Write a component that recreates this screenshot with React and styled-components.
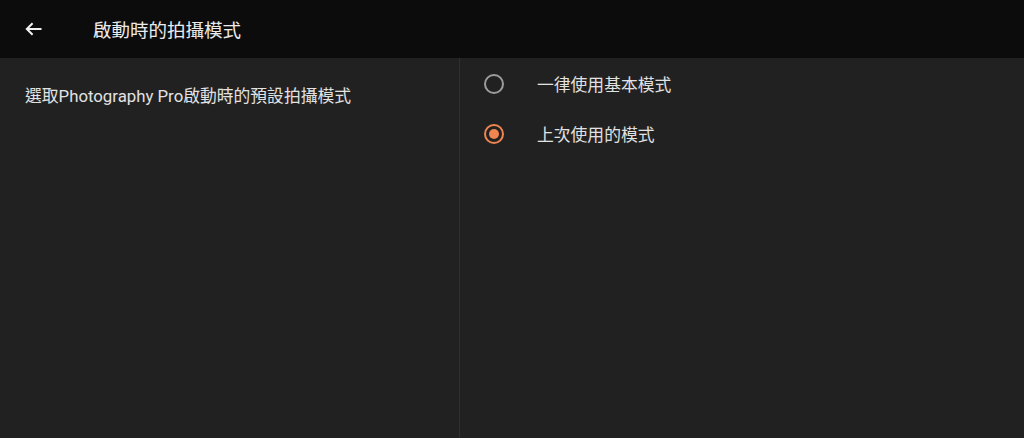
import React, { useState } from "react";
import styled, { createGlobalStyle } from "styled-components";

const GlobalStyle = createGlobalStyle`
  html, body {
    margin: 0;
    padding: 0;
    background: #212121;
  }
  body {
    font-family: Roboto, "Noto Sans CJK TC", "Noto Sans", sans-serif;
  }
`;

const Page = styled.div`
  width: 1024px;
  height: 438px;
  display: flex;
  flex-direction: column;
  background: #212121;
  overflow: hidden;
`;

const Header = styled.header`
  height: 58px;
  flex: 0 0 58px;
  display: flex;
  align-items: center;
  background: #0c0c0c;
  padding-left: 25px;
`;

const BackButton = styled.button`
  width: 17px;
  height: 14px;
  padding: 0;
  margin: 0 51px 0 0;
  border: 0;
  background: none;
  display: flex;
  align-items: center;
  cursor: pointer;
`;

const Title = styled.h1`
  margin: 0;
  font-size: 18.5px;
  font-weight: 400;
  color: #ececec;
`;

const Body = styled.div`
  flex: 1;
  display: flex;
`;

const LeftPane = styled.div`
  width: 460px;
  border-right: 1px solid #2f2f2f;
  padding: 26px 0 0 25px;
  box-sizing: border-box;
`;

const Description = styled.p`
  margin: 0;
  font-size: 16.8px;
  line-height: 24px;
  color: #e2e2e2;
`;

const Options = styled.div`
  flex: 1;
  display: flex;
  flex-direction: column;
  padding-top: 1px;
`;

const Option = styled.label`
  height: 50px;
  display: flex;
  align-items: center;
  padding-left: 24px;
  cursor: pointer;
`;

const Radio = styled.span`
  width: 20px;
  height: 20px;
  box-sizing: border-box;
  border-radius: 50%;
  border: 2px solid ${({ $checked }) => ($checked ? "#ef8550" : "#9c9c9c")};
  display: flex;
  align-items: center;
  justify-content: center;
  margin-right: 33px;

  &::after {
    content: "";
    width: 10px;
    height: 10px;
    border-radius: 50%;
    background: #ef8550;
    display: ${({ $checked }) => ($checked ? "block" : "none")};
  }
`;

const OptionText = styled.span`
  font-size: 16.8px;
  color: #e2e2e2;
`;

const options = ["一律使用基本模式", "上次使用的模式"];

export default function App() {
  const [selected, setSelected] = useState(1);

  return (
    <>
      <GlobalStyle />
      <Page>
        <Header>
          <BackButton aria-label="返回">
            <svg width="17" height="14" viewBox="0 0 17 14" fill="none">
              <path
                d="M16.5 7H1.8M7.6 1.2L1.8 7l5.8 5.8"
                stroke="#f2f2f2"
                strokeWidth="2"
              />
            </svg>
          </BackButton>
          <Title>啟動時的拍攝模式</Title>
        </Header>
        <Body>
          <LeftPane>
            <Description>選取Photography Pro啟動時的預設拍攝模式</Description>
          </LeftPane>
          <Options>
            {options.map((label, i) => (
              <Option key={label} onClick={() => setSelected(i)}>
                <Radio $checked={selected === i} />
                <OptionText>{label}</OptionText>
              </Option>
            ))}
          </Options>
        </Body>
      </Page>
    </>
  );
}
